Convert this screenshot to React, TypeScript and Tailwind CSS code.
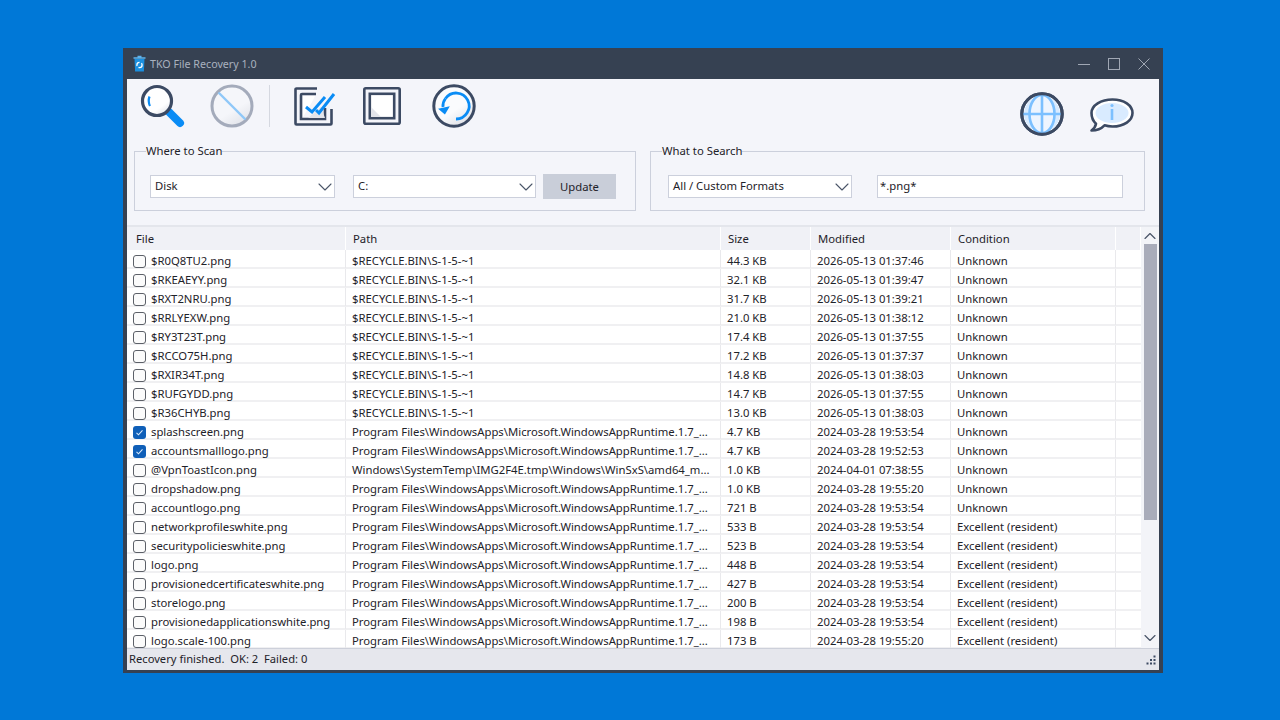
import { ChevronDown, ChevronUp } from "lucide-react";

const RECYCLE = "$RECYCLE.BIN\\S-1-5-~1";
const RUNTIME = "Program Files\\WindowsApps\\Microsoft.WindowsAppRuntime.1.7_...";
const EXCELLENT = "Excellent (resident)";

const ROWS = [
  { name: "$R0Q8TU2.png", path: RECYCLE, size: "44.3 KB", date: "2026-05-13 01:37:46", cond: "Unknown" },
  { name: "$RKEAEYY.png", path: RECYCLE, size: "32.1 KB", date: "2026-05-13 01:39:47", cond: "Unknown" },
  { name: "$RXT2NRU.png", path: RECYCLE, size: "31.7 KB", date: "2026-05-13 01:39:21", cond: "Unknown" },
  { name: "$RRLYEXW.png", path: RECYCLE, size: "21.0 KB", date: "2026-05-13 01:38:12", cond: "Unknown" },
  { name: "$RY3T23T.png", path: RECYCLE, size: "17.4 KB", date: "2026-05-13 01:37:55", cond: "Unknown" },
  { name: "$RCCO75H.png", path: RECYCLE, size: "17.2 KB", date: "2026-05-13 01:37:37", cond: "Unknown" },
  { name: "$RXIR34T.png", path: RECYCLE, size: "14.8 KB", date: "2026-05-13 01:38:03", cond: "Unknown" },
  { name: "$RUFGYDD.png", path: RECYCLE, size: "14.7 KB", date: "2026-05-13 01:37:55", cond: "Unknown" },
  { name: "$R36CHYB.png", path: RECYCLE, size: "13.0 KB", date: "2026-05-13 01:38:03", cond: "Unknown" },
  { name: "splashscreen.png", path: RUNTIME, size: "4.7 KB", date: "2024-03-28 19:53:54", cond: "Unknown", checked: true },
  { name: "accountsmalllogo.png", path: RUNTIME, size: "4.7 KB", date: "2024-03-28 19:52:53", cond: "Unknown", checked: true },
  { name: "@VpnToastIcon.png", path: "Windows\\SystemTemp\\IMG2F4E.tmp\\Windows\\WinSxS\\amd64_m...", size: "1.0 KB", date: "2024-04-01 07:38:55", cond: "Unknown" },
  { name: "dropshadow.png", path: RUNTIME, size: "1.0 KB", date: "2024-03-28 19:55:20", cond: "Unknown" },
  { name: "accountlogo.png", path: RUNTIME, size: "721 B", date: "2024-03-28 19:53:54", cond: "Unknown" },
  { name: "networkprofileswhite.png", path: RUNTIME, size: "533 B", date: "2024-03-28 19:53:54", cond: EXCELLENT },
  { name: "securitypolicieswhite.png", path: RUNTIME, size: "523 B", date: "2024-03-28 19:53:54", cond: EXCELLENT },
  { name: "logo.png", path: RUNTIME, size: "448 B", date: "2024-03-28 19:53:54", cond: EXCELLENT },
  { name: "provisionedcertificateswhite.png", path: RUNTIME, size: "427 B", date: "2024-03-28 19:53:54", cond: EXCELLENT },
  { name: "storelogo.png", path: RUNTIME, size: "200 B", date: "2024-03-28 19:53:54", cond: EXCELLENT },
  { name: "provisionedapplicationswhite.png", path: RUNTIME, size: "198 B", date: "2024-03-28 19:53:54", cond: EXCELLENT },
  { name: "logo.scale-100.png", path: RUNTIME, size: "173 B", date: "2024-03-28 19:55:20", cond: EXCELLENT },
];

const DARK = "#3c4a63";
const BLUE = "#0a8cf5";
const LIGHT_BLUE = "#7cc0ff";
const COLS = "grid-cols-[218px_375px_90px_140px_165px_25px]";

function TrashLogo() {
  return (
    <svg width="13" height="17" viewBox="0 0 13 17">
      <path d="M4.5 1.5h4M.5 3h12" stroke="#5db4ee" strokeWidth="1.4" fill="none" />
      <path d="M1.5 4h10l-.6 12.5H2.1z" fill="#1b8fdf" />
      <circle cx="6.5" cy="10" r="2.6" fill="none" stroke="#fff" strokeWidth="1.3" strokeDasharray="5 2" />
    </svg>
  );
}

function SearchIcon() {
  return (
    <svg width="46" height="46" viewBox="0 0 46 46">
      <defs>
        <linearGradient id="lens" x1="0.3" y1="0.3" x2="0.8" y2="1">
          <stop offset="0.6" stopColor="#ffffff" />
          <stop offset="1" stopColor="#dfe1e7" />
        </linearGradient>
      </defs>
      <path d="M29 28l11 11" stroke={BLUE} strokeWidth="8" strokeLinecap="round" />
      <circle cx="17" cy="17" r="14.5" fill="url(#lens)" stroke={DARK} strokeWidth="3.2" />
      <path d="M9.5 12.5a12 12 0 0 0 0.5 9.5" stroke={BLUE} strokeWidth="2.2" fill="none" />
    </svg>
  );
}

function StopIcon() {
  return (
    <svg width="44" height="44" viewBox="0 0 44 44">
      <defs>
        <linearGradient id="stop" x1="0.2" y1="0.2" x2="0.7" y2="1">
          <stop offset="0.55" stopColor="#f5f6fa" />
          <stop offset="1" stopColor="#e1e3e9" />
        </linearGradient>
      </defs>
      <circle cx="22" cy="22" r="20" fill="url(#stop)" stroke="#a4abbb" strokeWidth="3" />
      <path d="M8.5 8.5l27 27" stroke="#8fc8f8" strokeWidth="2.4" />
    </svg>
  );
}

function CheckAllIcon() {
  return (
    <svg width="42" height="40" viewBox="0 0 42 40">
      <path d="M23 1.5H2.500a1 1 0 0 0-1 1v34a1 1 0 0 0 1 1h34a1 1 0 0 0 1-1V22" fill="none" stroke={DARK} strokeWidth="2.6" />
      <path d="M22 7H8a1 1 0 0 0-1 1v24h24V21" fill="none" stroke={DARK} strokeWidth="2.6" />
      <path d="M9 9h12l-3 6-9 15z" fill="#fff" />
      <path d="M9 31L31 31 27 20 14 31z" fill="#e2e4ea" />
      <path d="M12 20l6 5L31 10" fill="none" stroke={BLUE} strokeWidth="3" />
      <path d="M22 23l3 3L40 7" fill="none" stroke={BLUE} strokeWidth="3" />
    </svg>
  );
}

function UncheckIcon() {
  return (
    <svg width="38" height="38" viewBox="0 0 38 38">
      <rect x="1.3" y="1.3" width="35.4" height="35.4" rx="1.5" fill="#f4f5fa" stroke={DARK} strokeWidth="2.6" />
      <rect x="6.800" y="6.800" width="24.400" height="24.400" fill="#fff" stroke={DARK} strokeWidth="2.6" />
      <path d="M8 30V20l10 10z" fill="#e2e4ea" />
    </svg>
  );
}

function RestoreIcon() {
  return (
    <svg width="44" height="44" viewBox="0 0 44 44">
      <defs>
        <linearGradient id="rest" x1="0.2" y1="0.2" x2="0.7" y2="1">
          <stop offset="0.55" stopColor="#fafbfd" />
          <stop offset="1" stopColor="#dfe1e7" />
        </linearGradient>
      </defs>
      <circle cx="22" cy="22" r="20.2" fill="url(#rest)" stroke={DARK} strokeWidth="3" />
      <path d="M13.5 14.5A13 13 0 1 1 24 35" fill="none" stroke={BLUE} strokeWidth="2.8" />
      <path d="M6.500 23.500h12L12 30.500z" transform="rotate(-12 12 26)" fill={BLUE} />
      <path d="M11 23a12 12 0 0 1 2.500-8.500" fill="none" stroke={BLUE} strokeWidth="2.8" />
    </svg>
  );
}

function GlobeIcon() {
  return (
    <svg width="44" height="44" viewBox="0 0 44 44">
      <circle cx="22" cy="22" r="20.2" fill="#fff" stroke={DARK} strokeWidth="3" />
      <ellipse cx="22" cy="22" rx="18" ry="18" fill="#d9ebff" />
      <ellipse cx="22" cy="22" rx="12.5" ry="19" fill="#eef5ff" stroke={LIGHT_BLUE} strokeWidth="2.6" />
      <path d="M22 3v38M3 22h38" stroke={LIGHT_BLUE} strokeWidth="2.6" />
      <circle cx="22" cy="22" r="20.2" fill="none" stroke={DARK} strokeWidth="3" />
    </svg>
  );
}

function InfoIcon() {
  return (
    <svg width="44" height="34" viewBox="0 0 44 34">
      <path
        d="M22.5 1.5c11.5 0 20 6 20 13.5s-8.500 13.500-20 13.500c-3 0-5.500-.4-8-1.200C11 31 6.500 32.500 1.500 32.500c2.200-1.500 4-4 4.500-6.800C3 23 1.500 19.500 1.500 15c0-7.500 9.500-13.500 21-13.500z"
        fill="#fff"
        stroke={DARK}
        strokeWidth="2.6"
        strokeLinejoin="round"
      />
      <ellipse cx="22" cy="15" rx="16.500" ry="10" fill="#d9ebff" />
      <circle cx="22" cy="7.500" r="1.600" fill={LIGHT_BLUE} />
      <path d="M22 11v11" stroke={LIGHT_BLUE} strokeWidth="2.600" />
    </svg>
  );
}

function Combo({ label, className }: { label: string; className: string }) {
  return (
    <div className={`flex h-[23px] items-center justify-between border border-[#ccd0dc] bg-white pl-[4px] ${className}`}>
      <span className="pb-[2px]">{label}</span>
      <ChevronDown className="-mr-[3px] h-[24px] w-[24px] flex-none text-[#4a5568]" strokeWidth={1.1} />
    </div>
  );
}

function CheckBox({ checked }: { checked?: boolean }) {
  if (checked) {
    return (
      <span className="flex h-[13px] w-[13px] flex-none items-center justify-center rounded-[3px] bg-[#0f5fb8]">
        <svg width="9" height="9" viewBox="0 0 9 9">
          <path d="M1.500 4.800l2 2 4-4.500" fill="none" stroke="#d8e8fa" strokeWidth="1.100" />
        </svg>
      </span>
    );
  }
  return <span className="block h-[13px] w-[13px] flex-none rounded-[3px] border border-[#5c6068] bg-[#fbfbfb]" />;
}

export default function App() {
  return (
    <div className="h-screen overflow-hidden bg-[#0078d7] pl-[123px] pt-[48px] font-['Noto_Sans',sans-serif] text-[11.3px] leading-[16px] text-[#1e2229]">
      <div className="flex h-[625px] w-[1040px] flex-col bg-[#364152] px-[4px] pb-[3px]">
        {/* title bar */}
        <div className="-mx-[4px] flex h-[31px] flex-none items-center pl-[10px]">
          <TrashLogo />
          <span className="ml-[4px] text-[10.7px] text-[#a9b1bf]">TKO File Recovery 1.0</span>
          <div className="ml-auto flex items-center gap-[18px] pr-[13px]">
            <svg width="12" height="12" viewBox="0 0 12 12"><path d="M0 6.500h12" stroke="#a0a7b4" /></svg>
            <svg width="12" height="12" viewBox="0 0 12 12"><rect x=".5" y=".5" width="11" height="11" fill="none" stroke="#a0a7b4" /></svg>
            <svg width="12" height="12" viewBox="0 0 12 12"><path d="M.5.500l11 11M11.500.500l-11 11" stroke="#a0a7b4" /></svg>
          </div>
        </div>

        <div className="flex min-h-0 flex-1 flex-col bg-[#f4f5fa]">
          {/* toolbar */}
          <div className="flex h-[64px] flex-none items-start pl-[13px] pr-[25px]">
            <div className="mt-[5px] h-[46px]"><SearchIcon /></div>
            <div className="ml-[24px] mt-[5px] h-[44px]"><StopIcon /></div>
            <div className="ml-[15px] mt-[6px] h-[42px] w-px bg-[#d5d8e0]" />
            <div className="ml-[24px] mt-[8px] h-[40px]"><CheckAllIcon /></div>
            <div className="ml-[27px] mt-[8px] h-[38px]"><UncheckIcon /></div>
            <div className="ml-[31px] mt-[5px] h-[44px]"><RestoreIcon /></div>
            <div className="ml-auto mt-[13px] h-[44px]"><GlobeIcon /></div>
            <div className="ml-[26px] mt-[19px] h-[34px]"><InfoIcon /></div>
          </div>

          {/* scan and search groups */}
          <div className="flex flex-none gap-[14px] pl-[7px] pr-[14px]">
            <fieldset className="h-[68px] w-[502px] border border-[#ccd0dc] pl-[15px] pr-[19px]">
              <legend className="-ml-[4px] leading-[16px]">Where to Scan</legend>
              <div className="mt-[15px] flex items-center">
                <Combo label="Disk" className="w-[185px]" />
                <Combo label="C:" className="ml-[18px] w-[183px]" />
                <div className="ml-[7px] flex h-[25px] w-[73px] items-center justify-center bg-[#c9ced9]">Update</div>
              </div>
            </fieldset>
            <fieldset className="h-[68px] w-[495px] border border-[#ccd0dc] pl-[17px]">
              <legend className="-ml-[6px] leading-[16px]">What to Search</legend>
              <div className="mt-[15px] flex h-[25px] items-center">
                <Combo label="All / Custom Formats" className="w-[184px]" />
                <div className="ml-[25px] flex h-[23px] w-[246px] items-center border border-[#ccd0dc] bg-white pb-[2px] pl-[2px]">*.png*</div>
              </div>
            </fieldset>
          </div>

          {/* file list */}
          <div className="mt-[14px] flex min-h-0 flex-1 border-b border-t-2 border-b-[#cdd0da] border-t-[#e4e6ec] bg-white">
            <div className="min-w-0 flex-1 overflow-hidden">
              <div className={`grid h-[23px] ${COLS} bg-[#f0f1f6] pl-px`}>
                {["File", "Path", "Size", "Modified", "Condition", ""].map((col, i) => (
                  <div key={i} className={`flex items-center border-r border-white ${i === 0 ? "pl-[8px]" : "pl-[7px]"}`}>{col}</div>
                ))}
              </div>
              {ROWS.map((row) => (
                <div key={row.name} className={`grid h-[19px] ${COLS} border-b-2 border-[#f0f0f2] pl-px leading-[14px]`}>
                  <div className="flex items-center gap-[5px] overflow-hidden border-r border-[#e9e9ec] pl-[5px] pt-[4px] whitespace-nowrap">
                    <CheckBox checked={row.checked} />
                    <span>{row.name}</span>
                  </div>
                  <div className="flex items-center overflow-hidden border-r border-[#e9e9ec] pl-[6px] pt-[4px] whitespace-nowrap">{row.path}</div>
                  <div className="flex items-center border-r border-[#e9e9ec] pl-[6px] pt-[4px]">{row.size}</div>
                  <div className="flex items-center border-r border-[#e9e9ec] pl-[6px] pt-[4px]">{row.date}</div>
                  <div className="flex items-center border-r border-[#e9e9ec] pl-[6px] pt-[4px]">{row.cond}</div>
                  <div />
                </div>
              ))}
            </div>
            {/* scrollbar */}
            <div className="flex w-[18px] flex-none flex-col items-center bg-[#f3f4f8]">
              <div className="flex h-[17px] flex-none items-center justify-center">
                <ChevronUp className="h-[20px] w-[20px] text-[#4a5568]" strokeWidth={1.4} />
              </div>
              <div className="h-[276px] w-[13px] flex-none bg-[#a9acba]" />
              <div className="mt-auto flex h-[20px] flex-none items-center justify-center">
                <ChevronDown className="h-[20px] w-[20px] text-[#4a5568]" strokeWidth={1.4} />
              </div>
            </div>
          </div>

          {/* status bar */}
          <div className="flex h-[21px] flex-none items-center justify-between bg-[#e6e7ed] pb-[2px] pl-[2px] pr-[3px]">
            <span className="whitespace-pre text-[11.2px]">Recovery finished.  OK: 2  Failed: 0</span>
            <svg width="10" height="10" viewBox="0 0 10 10" fill={DARK} className="mt-[2px]">
              <rect x="7.500" y="0.500" width="2" height="2" />
              <rect x="4" y="4" width="2" height="2" />
              <rect x="7.500" y="4" width="2" height="2" />
              <rect x="0.500" y="7.500" width="2" height="2" />
              <rect x="4" y="7.500" width="2" height="2" />
              <rect x="7.500" y="7.500" width="2" height="2" />
            </svg>
          </div>
        </div>
      </div>
    </div>
  );
}
